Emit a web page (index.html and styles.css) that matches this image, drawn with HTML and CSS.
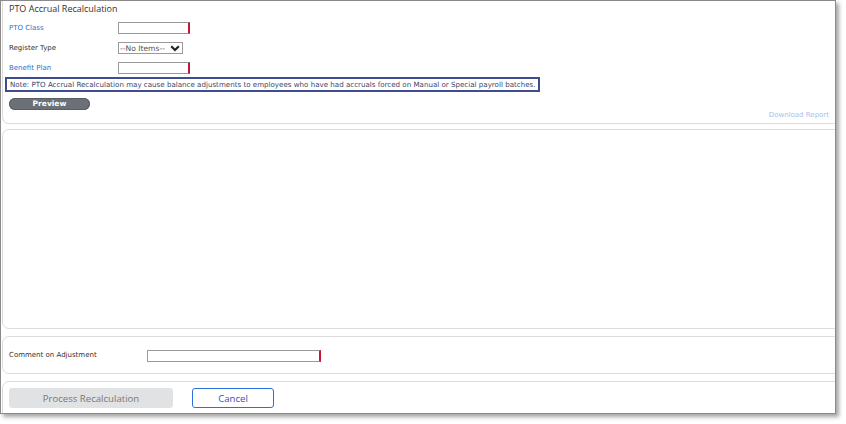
FILE: index.html
```html
<!DOCTYPE html>
<html>
<head>
<meta charset="utf-8">
<link rel="stylesheet" href="styles.css">
</head>
<body>
<div class="frame">
  <section class="panel p1">
    <div class="title">PTO Accrual Recalculation</div>
    <div class="row"><span class="lbl link">PTO Class</span><span class="inp req"></span></div>
    <div class="row"><span class="lbl">Register Type</span><span class="sel">--No Items--<svg class="chev" viewBox="0 0 10 7" width="10" height="7"><path d="M1.2 1.2 L5 5 L8.8 1.2" fill="none" stroke="#222" stroke-width="2.2"/></svg></span></div>
    <div class="row"><span class="lbl link">Benefit Plan</span><span class="inp req"></span></div>
    <div class="note">Note: PTO Accrual Recalculation may cause balance adjustments to employees who have had accruals forced on Manual or Special payroll batches.</div>
    <div class="preview">Preview</div>
    <div class="dl"><span>Download Report</span></div>
  </section>
  <section class="panel p2"></section>
  <section class="panel p3">
    <span class="lbl wide">Comment on Adjustment</span><span class="inp req long"></span>
  </section>
  <section class="panel p4">
    <button class="btn process">Process Recalculation</button>
    <button class="btn cancel">Cancel</button>
  </section>
</div>
</body>
</html>
```
FILE: styles.css
```css
html, body { margin: 0; padding: 0; background: #fff; }
body { width: 846px; height: 424px; overflow: hidden; font-family: "DejaVu Sans", Verdana, sans-serif; }
.frame {
  width: 836px; height: 414px;
  border: 1px solid #8a8a8a;
  box-shadow: 3px 3px 4px rgba(0,0,0,0.35);
  background: #fff;
  overflow: hidden;
  display: flex; flex-direction: column;
  box-sizing: border-box;
}
.panel {
  border: 1px solid #dcdcdc;
  border-radius: 7px;
  margin-left: 1px;
  margin-right: -12px;
  box-sizing: border-box;
  flex: none;
}
.p1 { height: 125px; margin-top: -2px; border-top-color: transparent; border-radius: 0 0 7px 7px; padding-top: 2px; }
.p2 { margin-top: 5px; height: 200px; }
.p3 { margin-top: 7px; height: 38px; display: flex; align-items: center; padding-left: 6px; }
.p4 { margin-top: 7px; height: 40px; display: flex; align-items: flex-start; padding: 6px 0 0 5px; border-radius: 7px 7px 0 0; }
.title {
  font-family: "Open Sans", sans-serif; font-size: 9px; color: #333;
  height: 16px; line-height: 14px; padding-left: 6px;
}
.row { height: 20px; display: flex; align-items: center; padding-left: 6px; }
.lbl { width: 109px; font-size: 7px; color: #333; flex: none; }
.lbl.wide { width: 138px; }
.lbl.link { color: #2f6fc8; }
.inp { width: 72px; height: 12px; border: 1px solid #9a9a9a; border-right: 2px solid #c8163c; box-sizing: border-box; background: #fff; }
.inp.long { width: 174px; margin-top: 2px; }
.sel {
  width: 65px; height: 12px; border: 1px solid #9a9a9a; box-sizing: border-box;
  font-size: 7.6px; color: #555; display: flex; align-items: center; justify-content: space-between; padding: 0 2px 0 1px;
}
.chev { display: block; }
.note {
  margin: -1px 0 0 2px; width: 535px; height: 15px; box-sizing: border-box;
  border: 2px solid #3d4d8f; font-size: 7.1px; color: #3a4766; line-height: 11px; padding-left: 3px; white-space: nowrap;
}
.preview {
  margin: 6px 0 0 6px; width: 81px; height: 12px; border-radius: 6px;
  background: #6c7077; color: #fff; font-weight: bold; font-size: 7.5px; text-align: center; line-height: 12px;
  box-shadow: inset 0 0 0 1px #5a5e64;
}
.dl { width: 826px; text-align: right; font-size: 7px; color: #a9c0ea; margin-top: 1px; }
.btn {
  font-family: "Open Sans", sans-serif; font-size: 9.6px; height: 20px; box-sizing: border-box; padding: 0; cursor: default;
}
.process { width: 164px; margin-left: 1px; background: #e1e2e4; border: 1px solid #e1e2e4; border-radius: 3px; color: #787878; }
.cancel { width: 82px; margin-left: 19px; background: #fff; border: 1px solid #2a6fe0; border-radius: 3px; color: #3b4fb8; }
```
